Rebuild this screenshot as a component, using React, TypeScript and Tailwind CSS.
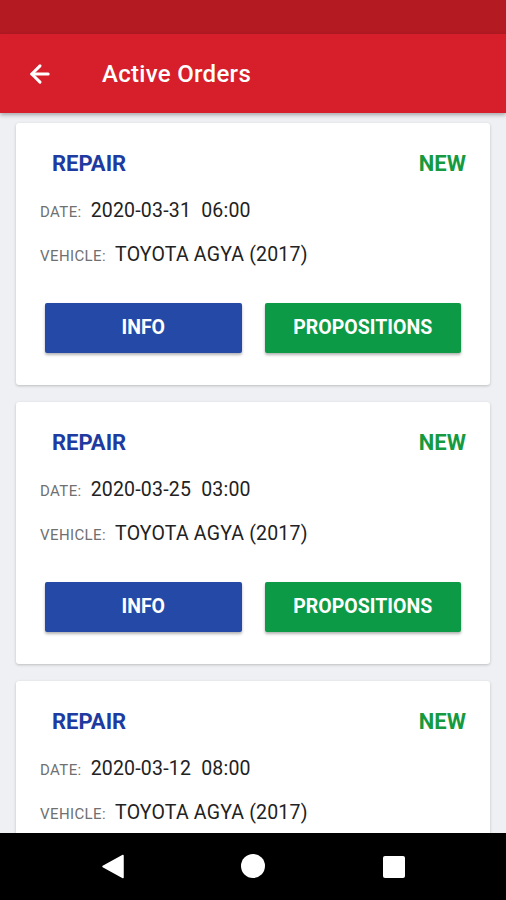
import { ArrowLeft } from "lucide-react";

const orders = [
  { date: "2020-03-31  06:00", vehicle: "TOYOTA AGYA (2017)" },
  { date: "2020-03-25  03:00", vehicle: "TOYOTA AGYA (2017)" },
  { date: "2020-03-12  08:00", vehicle: "TOYOTA AGYA (2017)" },
];

function OrderCard({ date, vehicle }: { date: string; vehicle: string }) {
  return (
    <div className="bg-white h-[262px] shrink-0 rounded-[3px] shadow-[0_1px_3px_rgba(0,0,0,0.22)] flex flex-col">
      <div className="mt-[28px] h-[24px] flex justify-between items-center pl-[36px] pr-[24px] text-[22px] font-bold">
        <span className="text-[#1d3ba0]">REPAIR</span>
        <span className="text-[#169a3f]">NEW</span>
      </div>
      <div className="mt-[24px] h-[24px] flex items-center pl-[24px] gap-[9px]">
        <span className="text-[15px] tracking-[0.4px] text-[#707070] mt-[2px]">DATE:</span>
        <span className="text-[19.5px] tracking-[0.2px] text-[#222] whitespace-pre">{date}</span>
      </div>
      <div className="mt-[20px] h-[24px] flex items-center pl-[24px] gap-[9px]">
        <span className="text-[15px] tracking-[0.4px] text-[#707070] mt-[2px]">VEHICLE:</span>
        <span className="text-[19.5px] tracking-[0.2px] text-[#222]">{vehicle}</span>
      </div>
      <div className="mt-[36px] flex px-[29px] gap-[23px]">
        <button className="flex-1 h-[50px] bg-[#2449a6] text-white text-[19.5px] font-bold rounded-[2px] shadow-[0_2px_3px_rgba(0,0,0,0.3)]">
          INFO
        </button>
        <button className="flex-1 h-[50px] bg-[#0c9a46] text-white text-[19.5px] font-bold rounded-[2px] shadow-[0_2px_3px_rgba(0,0,0,0.3)]">
          PROPOSITIONS
        </button>
      </div>
    </div>
  );
}

export default function App() {
  return (
    <div className="flex flex-col w-full h-screen bg-[#eef0f3] overflow-hidden" style={{ fontFamily: "Roboto, sans-serif" }}>
      <div className="h-[34px] shrink-0 bg-[#b31a22]" />
      <header className="h-[79px] shrink-0 bg-[#d61f2a] flex items-center text-white shadow-[0_2px_4px_rgba(0,0,0,0.3)] z-10">
        <ArrowLeft className="ml-[26px] w-[28px] h-[28px] mt-[1px]" strokeWidth={2.6} />
        <h1 className="ml-[48px] text-[24px] font-medium tracking-[0.3px] mt-[1px]">Active Orders</h1>
      </header>
      <main className="flex-1 overflow-hidden flex flex-col gap-[17px] px-[16px] pt-[10px]">
        {orders.map((o, i) => (
          <OrderCard key={i} date={o.date} vehicle={o.vehicle} />
        ))}
      </main>
      <nav className="h-[67px] shrink-0 bg-black flex items-center">
        <div className="w-[506px] flex items-center relative h-full">
          <svg className="absolute left-[101px] top-[21px]" width="24" height="25" viewBox="0 0 24 25">
            <path d="M22 1.5 L22 23.5 L2 12.5 Z" fill="white" stroke="white" strokeWidth="1.5" strokeLinejoin="round" />
          </svg>
          <div className="absolute left-[241px] top-[21px] w-[24px] h-[24px] rounded-full bg-white" />
          <div className="absolute left-[383px] top-[23px] w-[22px] h-[22px] rounded-[2px] bg-white" />
        </div>
      </nav>
    </div>
  );
}
